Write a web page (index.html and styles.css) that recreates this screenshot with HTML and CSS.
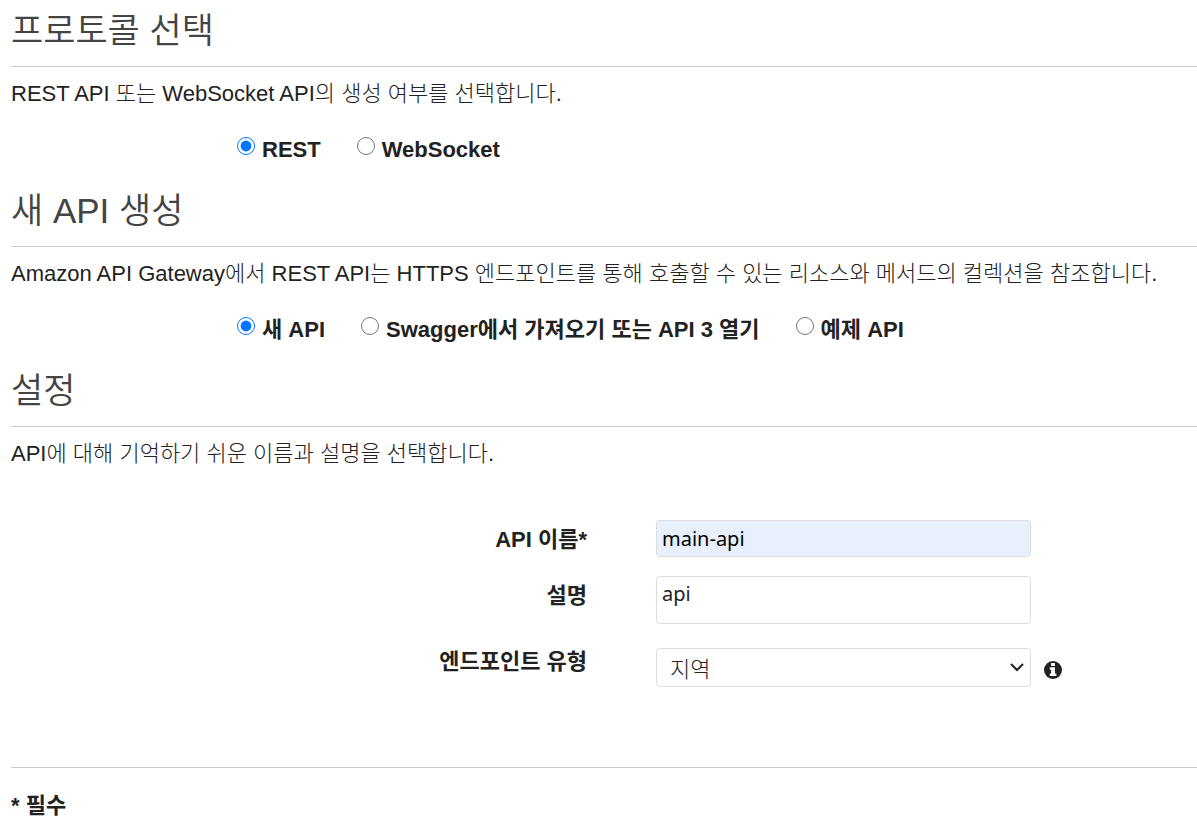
FILE: index.html
```html
<!DOCTYPE html>
<html lang="ko">
<head>
    <meta charset="UTF-8">
    <meta name="viewport" content="width=device-width, initial-scale=1.0">
    <title>API Gateway</title>
    <link rel="stylesheet" href="styles.css">
</head>
<body>
    <form class="create-form">
        <section class="section">
            <h2>프로토콜 선택</h2>
            <p>REST API 또는 WebSocket API의 생성 여부를 선택합니다.</p>
            <div class="radio-row">
                <label><input type="radio" name="protocol" checked>REST</label>
                <label><input type="radio" name="protocol">WebSocket</label>
            </div>
        </section>

        <section class="section">
            <h2>새 API 생성</h2>
            <p>Amazon API Gateway에서 REST API는 HTTPS 엔드포인트를 통해 호출할 수 있는 리소스와 메서드의 컬렉션을 참조합니다.</p>
            <div class="radio-row">
                <label><input type="radio" name="source" checked>새 API</label>
                <label><input type="radio" name="source">Swagger에서 가져오기 또는 API 3 열기</label>
                <label><input type="radio" name="source">예제 API</label>
            </div>
        </section>

        <section class="section">
            <h2>설정</h2>
            <p>API에 대해 기억하기 쉬운 이름과 설명을 선택합니다.</p>
        </section>

        <div class="settings">
            <div class="field">
                <label for="api-name">API 이름*</label>
                <input class="control name-input" type="text" id="api-name" value="main-api">
            </div>
            <div class="field">
                <label for="description">설명</label>
                <textarea class="control description-input" id="description">api</textarea>
            </div>
            <div class="field">
                <label for="endpoint-type">엔드포인트 유형</label>
                <div class="select-wrap">
                    <select class="control type-select" id="endpoint-type">
                        <option>지역</option>
                    </select>
                    <svg class="chevron" viewBox="0 0 14 9" width="14" height="9"><path d="M1 1l6 6 6-6" fill="none" stroke="#222" stroke-width="2"/></svg>
                </div>
                <svg class="info-icon" viewBox="0 0 18 18" width="18" height="18">
                    <circle cx="9" cy="9" r="9" fill="#222"/>
                    <path d="M7.1 2h3.9v3H7.1zM5.8 6.3H11v6.2h1.4V15H5.8v-2.5h1.3V8.8H5.8z" fill="#fff"/>
                </svg>
            </div>
        </div>

        <footer class="form-footer">* 필수</footer>
    </form>
</body>
</html>
```
FILE: styles.css
```css
* {
    box-sizing: border-box;
}

body {
    margin: 0;
    padding-left: 11px;
    background-color: #fff;
    color: #222;
    font-family: "Liberation Sans", "Noto Sans CJK KR", sans-serif;
    font-size: 22px;
    line-height: 28px;
}

h2 {
    margin: 0;
    padding: 9px 0 13px;
    border-bottom: 1px solid #ccc;
    color: #444;
    font-size: 35px;
    font-weight: 350;
    line-height: 44px;
}

p {
    margin: 13px 0 0;
    font-weight: 300;
}

.section {
    padding-bottom: 16px;
}

.radio-row {
    display: flex;
    gap: 36px;
    margin-top: 28px;
    padding-left: 226px;
    font-weight: bold;
}

.radio-row label {
    display: flex;
}

.radio-row input {
    width: 18px;
    height: 18px;
    margin: 1px 7px 0 0;
}

.settings {
    margin-top: 36px;
}

.field {
    display: grid;
    grid-template-columns: 645fr 375fr 166fr;
}

.field + .field {
    margin-top: 19px;
}

.field:last-child {
    margin-top: 24px;
}

.field label {
    padding: 6px 69px 0 0;
    font-weight: bold;
    text-align: right;
}

.field:last-child label {
    padding-top: 0;
}

.control {
    display: block;
    width: 100%;
    margin: 0;
    padding: 3px 5px;
    border: 1px solid #ddd;
    border-radius: 4px;
    background-color: #fff;
    color: #222;
    font-family: "Noto Sans", "Noto Sans CJK KR", sans-serif;
    font-size: 20px;
    line-height: 28px;
}

.name-input {
    height: 37px;
    background-color: #e8f0fe;
    color: #000;
}

.description-input {
    height: 48px;
    resize: none;
}

.type-select {
    height: 39px;
    padding: 3px 13px;
    appearance: none;
    font-size: 22px;
    font-weight: 300;
}

.select-wrap {
    position: relative;
}

.chevron {
    position: absolute;
    top: 15px;
    right: 7px;
    pointer-events: none;
}

.info-icon {
    margin: 13px 0 0 13px;
}

.form-footer {
    margin-top: 80px;
    padding: 24px 0 16px;
    border-top: 1px solid #ccc;
    font-weight: bold;
}
```
